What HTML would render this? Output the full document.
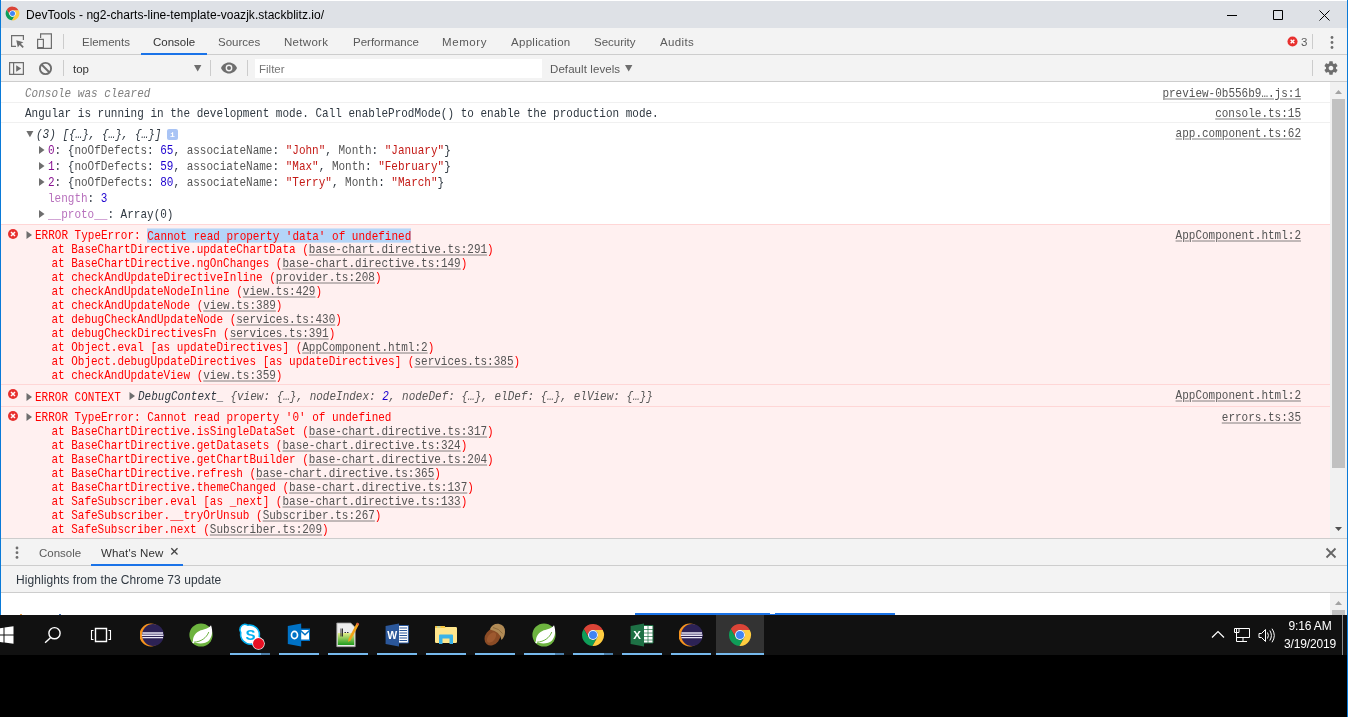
<!DOCTYPE html>
<html><head><meta charset="utf-8"><title>DevTools</title>
<style>
*{box-sizing:border-box;margin:0;padding:0}
html,body{width:1348px;height:717px;overflow:hidden;background:#000}
body{position:relative;font-family:"Liberation Sans",sans-serif;font-size:12px;color:#303942}
.abs{position:absolute}
svg{position:absolute;overflow:visible}
#win{will-change:transform;position:absolute;left:0;top:0;width:1348px;height:615px;background:#fff;overflow:hidden}
#title{position:absolute;left:0;top:0;width:1348px;height:28px;background:#dee1e6;border-top:1px solid #fff}
#title .t{position:absolute;left:26px;top:7px;letter-spacing:.035px;font-size:12px;line-height:14px;color:#000;white-space:nowrap}
#tabs{position:absolute;left:0;top:28px;width:1348px;height:27px;background:#f3f3f3;border-bottom:1px solid #cdcdcd}
.tab{position:absolute;top:7px;font-size:11.5px;line-height:14px;color:#5a5a5a;white-space:nowrap}
.tab.sel{color:#333}
#tbar{position:absolute;left:0;top:55px;width:1348px;height:27px;background:#f3f3f3;border-bottom:1px solid #cdcdcd}
.vsep{position:absolute;width:1px;background:#ccc}
.ul{position:absolute;height:2px;background:#1a73e8}
#msgs{position:absolute;left:0;top:82px;width:1331px;height:456px;background:#fff;overflow:hidden;font-family:"Liberation Mono",monospace;font-size:11px;color:#303942}
.row{position:absolute;left:0;width:1331px;border-top:1px solid #f0f0f0}
.row.err{background:#fff0f0;border-top:1px solid #ffd6d6;color:#ff0000}
.ln{position:absolute;white-space:pre;line-height:14px;height:14px;transform:translateY(1.1px) scaleY(1.09);transform-origin:0 7px}
.src{position:absolute;right:30px;white-space:pre;line-height:14px;height:14px;transform:translateY(1.1px) scaleY(1.09);transform-origin:0 7px;color:#545454;text-decoration:underline;text-decoration-color:rgba(84,84,84,.65)}
.lk{color:#545454;text-decoration:underline;text-decoration-color:rgba(84,84,84,.65)}
.num{color:#1c00cf}.str{color:#c41a16}.key{color:#881391}.dim{color:#b871bd}
i{font-style:italic}.pk{color:#565656}.selt{background:#b4d5f8;padding-top:1.5px}
.sb{position:absolute;left:1330px;width:17px;background:#f1f1f1}
.sb b{position:absolute;left:2px;width:13px;background:#c1c1c1}
#drawer{position:absolute;left:0;top:538px;width:1348px;height:77px;background:#fff;border-top:1px solid #cdcdcd}
#dtabs{position:absolute;left:0;top:0;width:1348px;height:27px;background:#f3f3f3;border-bottom:1px solid #cdcdcd}
#dhead{position:absolute;left:0;top:27px;width:1348px;height:27px;background:#f3f3f3;border-bottom:1px solid #cdcdcd}
#task{will-change:transform;position:absolute;left:0;top:615px;width:1348px;height:40px;background:#111}
.run{position:absolute;top:38px;height:2px;background:#76b9ed}
.run2{position:absolute;top:38px;height:2px;background:#4c7faa}
.edge{position:absolute;top:0;width:1px;background:#0a7ad8}
.clk{will-change:transform;position:absolute;color:#fff;font-size:12px;line-height:14px;white-space:nowrap;text-align:center}
</style></head><body>
<svg width="0" height="0"><defs><symbol id="chr" viewBox="0 0 48 48"><path d="M43.60 14.00A22 22 0 0 0 5.54 12.03L15.34 29.00A10 10 0 0 1 24.00 14.00Z" fill="#db4437"/><path d="M5.54 12.03A22 22 0 0 0 22.86 45.97L32.66 29.00A10 10 0 0 1 15.34 29.00Z" fill="#0f9d58"/><path d="M22.86 45.97A22 22 0 0 0 43.60 14.00L24.00 14.00A10 10 0 0 1 32.66 29.00Z" fill="#ffcd40"/><circle cx="24" cy="24" r="10" fill="#fff"/><circle cx="24" cy="24" r="8" fill="#4285f4"/></symbol>
<symbol id="ecl" viewBox="0 0 24 24"><circle cx="10.800" cy="12" r="11.400" fill="#f7941e"/><circle cx="13" cy="12" r="10.900" fill="#2c2255"/><path d="M2.4 9.3h20.6v1.5H2.4zM1.8 11.6h21.6v1.5H1.8zM2.4 13.9h20.6v1.4H2.4z" fill="#e9e6f5"/></symbol>
<symbol id="spr" viewBox="0 0 24 24"><circle cx="12" cy="12" r="11.600" fill="#6db33f"/><path d="M4.200 18.800C3.400 15.500 5 10.500 10.400 7.900C14 6.200 18.500 6.800 22 2.300C24 8 23.500 13 20 17.400C17 20.800 9 21.500 4.200 18.800Z" fill="#fff"/><path d="M5 19.200C12 18.700 17.500 15 19.800 9" fill="none" stroke="#6db33f" stroke-width="1"/><circle cx="4.300" cy="19.300" r="1" fill="#fff"/></symbol>
</defs></svg>
<div id="win">
<div id="title">
<svg style="left:5px;top:5px" width="15" height="15"><use href="#chr"/></svg>
<span class="t">DevTools - ng2-charts-line-template-voazjk.stackblitz.io/</span>
<svg style="left:1220px;top:0" width="128" height="28" fill="none" stroke="#000" stroke-width="1"><path d="M7 14.500h10M53.500 9.500h9v9h-9zM99.500 9.500l10 10M109.500 9.500l-10 10"/></svg>
</div>
<div id="tabs">
<svg style="left:0;top:0" width="70" height="27" fill="none" stroke="#6e6e6e" stroke-width="1.200"><path d="M16 18.400h-4.400V7.600h11.800V12"/><path d="M16.300 12.300l1.500 7.200 1.800-2.500 3 3 1.200-1.200-3-3 2.600-1.600z" fill="#6e6e6e" stroke="none"/><path d="M40.600 10V5.900h10.800v14.400h-8M37.600 11.300h5.800v9.200h-5.800z"/><path d="M37.600 19h5.800v1.500h-5.800z" fill="#6e6e6e" stroke="none"/></svg>
<div class="vsep" style="left:63px;top:6px;height:15px"></div>
<span class="tab" style="left:82px">Elements</span>
<span class="tab sel" style="left:153px">Console</span>
<span class="tab" style="left:218px">Sources</span>
<span class="tab" style="left:284px;letter-spacing:.3px">Network</span>
<span class="tab" style="left:353px">Performance</span>
<span class="tab" style="left:442px;letter-spacing:.6px">Memory</span>
<span class="tab" style="left:511px;letter-spacing:.3px">Application</span>
<span class="tab" style="left:594px">Security</span>
<span class="tab" style="left:660px;letter-spacing:.35px">Audits</span>
<div class="ul" style="left:141px;top:25px;width:66px"></div>
<svg style="left:1287px;top:8px" width="11" height="11" viewBox="0 0 12 12"><circle cx="6" cy="6" r="5.500" fill="#e8302e"/><path d="M4 4L8 8M8 4L4 8" stroke="#fff" stroke-width="1.500"/></svg>
<span class="tab" style="left:1301px;color:#5a5a5a">3</span>
<div class="vsep" style="left:1312px;top:6px;height:15px"></div>
<svg style="left:1329.500px;top:6.500px" width="4" height="16" fill="#6e6e6e"><circle cx="2" cy="2.500" r="1.400"/><circle cx="2" cy="7.500" r="1.400"/><circle cx="2" cy="12.500" r="1.400"/></svg>
</div>
<div id="tbar">
<svg style="left:0;top:0" width="70" height="27" fill="none" stroke="#6e6e6e" stroke-width="1.200"><path d="M9.600 7.600h13.800v11.800H9.600zM13.600 7.600v11.800"/><path d="M16.200 10.200l5 3.300-5 3.300z" fill="#6e6e6e" stroke="none"/><circle cx="45.500" cy="13.500" r="5.600" stroke-width="1.900"/><path d="M41.500 9.500l8 8" stroke-width="1.900"/></svg>
<div class="vsep" style="left:63px;top:5px;height:16px"></div>
<span class="tab" style="left:73px;top:7px;color:#333">top</span>
<svg style="left:194px;top:10px" width="8" height="7"><path d="M0 0h7.400L3.700 6.400z" fill="#6e6e6e"/></svg>
<div class="vsep" style="left:210px;top:5px;height:16px"></div>
<svg style="left:221px;top:7px" width="16" height="12" viewBox="0 0 16 12"><path d="M8 .5C4.400.5 1.400 2.800 0 6c1.400 3.200 4.400 5.500 8 5.500s6.600-2.300 8-5.500C14.600 2.800 11.600.5 8 .5z" fill="#6e6e6e"/><circle cx="8" cy="6" r="3.400" fill="#f3f3f3"/><circle cx="8" cy="6" r="2" fill="#6e6e6e"/></svg>
<div class="vsep" style="left:247px;top:5px;height:16px"></div>
<div class="abs" style="left:255px;top:4px;width:287px;height:19px;background:#fff"></div>
<span class="tab" style="left:259px;top:7px;color:#757575">Filter</span>
<span class="tab" style="left:550px;top:6.500px;color:#5a5a5a;letter-spacing:.08px">Default levels</span>
<svg style="left:625px;top:10px" width="8" height="7"><path d="M0 0h7.400L3.700 6.400z" fill="#6e6e6e"/></svg>
<div class="vsep" style="left:1312px;top:5px;height:16px"></div>
<svg style="left:1323px;top:5px" width="16" height="16" viewBox="0 0 24 24"><path fill="#6e6e6e" d="M19.430 12.980c.040-.320.070-.640.070-.980s-.030-.660-.070-.980l2.110-1.650c.190-.150.240-.420.120-.640l-2-3.460c-.120-.220-.390-.300-.610-.220l-2.490 1c-.520-.400-1.080-.730-1.690-.980l-.380-2.650C14.460 2.180 14.250 2 14 2h-4c-.250 0-.460.180-.490.420l-.380 2.650c-.610.250-1.170.590-1.690.980l-2.490-1c-.230-.090-.490 0-.610.220l-2 3.460c-.130.220-.070.490.120.640l2.110 1.650c-.040.320-.070.650-.070.980s.030.660.070.980l-2.110 1.650c-.190.150-.240.420-.120.640l2 3.460c.120.220.390.300.610.220l2.490-1c.520.400 1.080.730 1.690.980l.380 2.650c.030.240.240.420.490.420h4c.250 0 .460-.180.490-.420l.380-2.650c.610-.250 1.170-.590 1.690-.980l2.490 1c.230.090.490 0 .610-.220l2-3.460c.120-.220.070-.490-.120-.640l-2.110-1.650zM12 15.500c-1.930 0-3.500-1.570-3.500-3.500s1.570-3.500 3.500-3.500 3.500 1.570 3.500 3.500-1.570 3.500-3.500 3.500z"/></svg>
</div>
<div id="msgs">
<div class="row" style="top:0px;height:20px;border-top:none"></div>
<div class="row" style="top:20px;height:20px"></div>
<div class="row" style="top:40px;height:102px"></div>
<div class="row err" style="top:142px;height:160px"></div>
<div class="row err" style="top:302px;height:22px"></div>
<div class="row err" style="top:324px;height:134px"></div>
<div class="ln" style="top:4px;left:25px"><i style="color:#808080">Console was cleared</i></div>
<div class="src" style="top:4px">preview-0b556b9….js:1</div>
<div class="ln" style="top:24px;left:25px">Angular is running in the development mode. Call enableProdMode() to enable the production mode.</div>
<div class="src" style="top:24px">console.ts:15</div>
<svg class="abs" style="left:0;top:-82px" width="700" height="540" ><polygon points="26.4,131 33.4,131 29.9,137.2" fill="#6e6e6e"/></svg>
<div class="ln" style="top:45px;left:36px"><i>(3) [{…}, {…}, {…}]</i></div>
<div class="src" style="top:44px">app.component.ts:62</div>
<div class="abs" style="left:167px;top:47px;width:11px;height:11px;border-radius:2px;background:#a9c4f5;color:#fff;font:bold 8px/11px 'Liberation Mono',monospace;text-align:center">i</div>
<svg class="abs" style="left:0;top:-82px" width="700" height="540" ><polygon points="39.0,146 44.5,150 39.0,154" fill="#6e6e6e"/></svg>
<div class="ln" style="top:61px;left:48px"><span class="key">0</span>: {<span class="pk">noOfDefects</span>: <span class="num">65</span>, <span class="pk">associateName</span>: <span class="str">"John"</span>, <span class="pk">Month</span>: <span class="str">"January"</span>}</div>
<svg class="abs" style="left:0;top:-82px" width="700" height="540" ><polygon points="39.0,162 44.5,166 39.0,170" fill="#6e6e6e"/></svg>
<div class="ln" style="top:77px;left:48px"><span class="key">1</span>: {<span class="pk">noOfDefects</span>: <span class="num">59</span>, <span class="pk">associateName</span>: <span class="str">"Max"</span>, <span class="pk">Month</span>: <span class="str">"February"</span>}</div>
<svg class="abs" style="left:0;top:-82px" width="700" height="540" ><polygon points="39.0,178 44.5,182 39.0,186" fill="#6e6e6e"/></svg>
<div class="ln" style="top:93px;left:48px"><span class="key">2</span>: {<span class="pk">noOfDefects</span>: <span class="num">80</span>, <span class="pk">associateName</span>: <span class="str">"Terry"</span>, <span class="pk">Month</span>: <span class="str">"March"</span>}</div>
<div class="ln" style="top:109px;left:48px"><span class="dim">length</span>: <span class="num">3</span></div>
<svg class="abs" style="left:0;top:-82px" width="700" height="540" ><polygon points="39.0,210 44.5,214 39.0,218" fill="#6e6e6e"/></svg>
<div class="ln" style="top:125px;left:48px"><span class="dim">__proto__</span>: Array(0)</div>
<svg class="abs" style="left:7px;top:146px" width="12" height="12" viewBox="0 0 12 12"><circle cx="6" cy="6" r="5" fill="#e8302e"/><path d="M4 4L8 8M8 4L4 8" stroke="#fff" stroke-width="1.5" stroke-linecap="butt"/></svg>
<svg class="abs" style="left:0;top:-82px" width="700" height="540" ><polygon points="26.5,231 32,235 26.5,239" fill="#6e6e6e"/></svg>
<div class="ln" style="top:146px;left:35px;color:#f00">ERROR TypeError: <span class="selt">Cannot read property 'data' of undefined</span></div>
<div class="src" style="top:146px">AppComponent.html:2</div>
<div class="ln" style="top:160px;left:25px;color:#f00">    at BaseChartDirective.updateChartData (<span class="lk">base-chart.directive.ts:291</span>)</div>
<div class="ln" style="top:174px;left:25px;color:#f00">    at BaseChartDirective.ngOnChanges (<span class="lk">base-chart.directive.ts:149</span>)</div>
<div class="ln" style="top:188px;left:25px;color:#f00">    at checkAndUpdateDirectiveInline (<span class="lk">provider.ts:208</span>)</div>
<div class="ln" style="top:202px;left:25px;color:#f00">    at checkAndUpdateNodeInline (<span class="lk">view.ts:429</span>)</div>
<div class="ln" style="top:216px;left:25px;color:#f00">    at checkAndUpdateNode (<span class="lk">view.ts:389</span>)</div>
<div class="ln" style="top:230px;left:25px;color:#f00">    at debugCheckAndUpdateNode (<span class="lk">services.ts:430</span>)</div>
<div class="ln" style="top:244px;left:25px;color:#f00">    at debugCheckDirectivesFn (<span class="lk">services.ts:391</span>)</div>
<div class="ln" style="top:258px;left:25px;color:#f00">    at Object.eval [as updateDirectives] (<span class="lk">AppComponent.html:2</span>)</div>
<div class="ln" style="top:272px;left:25px;color:#f00">    at Object.debugUpdateDirectives [as updateDirectives] (<span class="lk">services.ts:385</span>)</div>
<div class="ln" style="top:286px;left:25px;color:#f00">    at checkAndUpdateView (<span class="lk">view.ts:359</span>)</div>
<svg class="abs" style="left:7px;top:306px" width="12" height="12" viewBox="0 0 12 12"><circle cx="6" cy="6" r="5" fill="#e8302e"/><path d="M4 4L8 8M8 4L4 8" stroke="#fff" stroke-width="1.5" stroke-linecap="butt"/></svg>
<svg class="abs" style="left:0;top:-82px" width="700" height="540" ><polygon points="26.5,393 32,397 26.5,401" fill="#6e6e6e"/></svg>
<div class="ln" style="top:308px;left:35px;color:#f00">ERROR CONTEXT</div>
<svg class="abs" style="left:0;top:-82px" width="700" height="540" ><polygon points="129.5,392 135,396 129.5,400" fill="#6e6e6e"/></svg>
<div class="ln" style="top:307px;left:138px"><i style="color:#303942">DebugContext_ <span class="pk">{view: {…}, nodeIndex: <span class="num">2</span>, nodeDef: {…}, elDef: {…}, elView: {…}}</span></i></div>
<div class="src" style="top:306px">AppComponent.html:2</div>
<svg class="abs" style="left:7px;top:328px" width="12" height="12" viewBox="0 0 12 12"><circle cx="6" cy="6" r="5" fill="#e8302e"/><path d="M4 4L8 8M8 4L4 8" stroke="#fff" stroke-width="1.5" stroke-linecap="butt"/></svg>
<svg class="abs" style="left:0;top:-82px" width="700" height="540" ><polygon points="26.5,413 32,417 26.5,421" fill="#6e6e6e"/></svg>
<div class="ln" style="top:328px;left:35px;color:#f00">ERROR TypeError: Cannot read property '0' of undefined</div>
<div class="src" style="top:328px">errors.ts:35</div>
<div class="ln" style="top:342px;left:25px;color:#f00">    at BaseChartDirective.isSingleDataSet (<span class="lk">base-chart.directive.ts:317</span>)</div>
<div class="ln" style="top:356px;left:25px;color:#f00">    at BaseChartDirective.getDatasets (<span class="lk">base-chart.directive.ts:324</span>)</div>
<div class="ln" style="top:370px;left:25px;color:#f00">    at BaseChartDirective.getChartBuilder (<span class="lk">base-chart.directive.ts:204</span>)</div>
<div class="ln" style="top:384px;left:25px;color:#f00">    at BaseChartDirective.refresh (<span class="lk">base-chart.directive.ts:365</span>)</div>
<div class="ln" style="top:398px;left:25px;color:#f00">    at BaseChartDirective.themeChanged (<span class="lk">base-chart.directive.ts:137</span>)</div>
<div class="ln" style="top:412px;left:25px;color:#f00">    at SafeSubscriber.eval [as _next] (<span class="lk">base-chart.directive.ts:133</span>)</div>
<div class="ln" style="top:426px;left:25px;color:#f00">    at SafeSubscriber.__tryOrUnsub (<span class="lk">Subscriber.ts:267</span>)</div>
<div class="ln" style="top:440px;left:25px;color:#f00">    at SafeSubscriber.next (<span class="lk">Subscriber.ts:209</span>)</div>
</div>
<div class="sb" style="top:82px;height:456px"><b style="top:17px;height:369px"></b>
<svg style="left:5px;top:8px" width="7" height="4"><path d="M0 4L3.500 0 7 4z" fill="#a3a3a3"/></svg>
<svg style="left:5px;top:445px" width="7" height="4"><path d="M0 0h7L3.500 4z" fill="#505050"/></svg>
</div>
<div id="drawer">
<div id="dtabs">
<svg style="left:15px;top:7px" width="4" height="14" fill="#6e6e6e"><circle cx="2" cy="2" r="1.400"/><circle cx="2" cy="6.700" r="1.400"/><circle cx="2" cy="11.400" r="1.400"/></svg>
<span class="tab" style="left:39px;top:7px">Console</span>
<span class="tab sel" style="left:101px;top:6.500px;letter-spacing:.15px">What's New</span>
<svg style="left:170.600px;top:9px" width="7" height="7" stroke="#444" stroke-width="1.300"><path d="M.3.300l6.200 6.200M6.500.300l-6.200 6.200"/></svg>
<div class="ul" style="left:91px;top:25px;width:92px"></div>
<svg style="left:1326px;top:8.500px" width="10" height="10" stroke="#666" stroke-width="1.800"><path d="M.5.500l9 9M9.500.500l-9 9"/></svg>
</div>
<div id="dhead"><span class="tab" style="left:16px;top:6.500px;color:#303942;font-size:12px;letter-spacing:.07px">Highlights from the Chrome 73 update</span></div>
<div class="abs" style="left:635px;top:74px;width:260px;height:3px;background:#1a73e8"></div>
<div class="abs" style="left:770px;top:74px;width:5px;height:1px;background:#fff"></div>
<div class="abs" style="left:20px;top:75px;width:2px;height:1px;background:#e8a04a"></div><div class="abs" style="left:59px;top:75px;width:2px;height:1px;background:#3f6fb5"></div>
</div>
<div class="sb" style="top:593px;height:22px"><b style="top:17px;height:5px"></b>
<svg style="left:5px;top:8px" width="7" height="4"><path d="M0 4L3.500 0 7 4z" fill="#a3a3a3"/></svg>
</div>
<div class="edge" style="left:0;height:615px"></div>
</div>
<div id="task">
<svg style="left:0;top:0" width="130" height="40"><path d="M-3.500 13.700l7-1v6.900h-7zM4.500 12.600l9-1.300v8.300h-9zM-3.500 20.500h7v6.900l-7-1zM4.500 20.500h9v8.300l-9-1.300z" fill="#fff"/><g fill="none" stroke="#fff" stroke-width="1.400"><circle cx="54.500" cy="18.200" r="5.600"/><path d="M50.700 22.400l-5.600 5.400"/><path d="M95.500 13.500h11v13h-11z"/><path d="M93.500 15.500h-2v9h2M108.500 15.500h2v9h-2" stroke-width="1.100"/></g></svg>
<svg style="left:140px;top:8px" width="24" height="24"><use href="#ecl"/></svg>
<svg style="left:189px;top:8px" width="24" height="24"><use href="#spr"/></svg>
<div class="abs" style="left:716px;top:0;width:48px;height:40px;background:#333"></div>
<div class="run" style="left:230px;width:31px"></div><div class="run2" style="left:261px;width:9px"></div>
<div class="run" style="left:279px;width:40px"></div>
<div class="run" style="left:328px;width:40px"></div>
<div class="run" style="left:377px;width:40px"></div>
<div class="run" style="left:426px;width:40px"></div>
<div class="run" style="left:475px;width:40px"></div>
<div class="run" style="left:524px;width:31px"></div><div class="run2" style="left:555px;width:9px"></div>
<div class="run" style="left:573px;width:31px"></div><div class="run2" style="left:604px;width:9px"></div>
<div class="run" style="left:622px;width:40px"></div>
<div class="run" style="left:671px;width:40px"></div>
<div class="run" style="left:716px;width:48px"></div>
<!-- skype -->
<svg style="left:238.500px;top:7.500px" width="27" height="27" viewBox="0 0 26 26"><path d="M5.300 1.200a5 5 0 0 1 3 .9 9.500 9.500 0 0 1 11.200 11 5.200 5.200 0 0 1-7.300 7.200A9.500 9.500 0 0 1 1.700 9.200a5.200 5.200 0 0 1 3.600-8z" fill="#fff" stroke="#00aff0" stroke-width="1.500"/><text x="11" y="16.500" text-anchor="middle" font-family="Liberation Sans,sans-serif" font-weight="bold" font-size="14.500" fill="#00aff0">S</text><circle cx="18.800" cy="19.800" r="6" fill="#fff"/><circle cx="18.800" cy="19.800" r="5.300" fill="#e81123"/></svg>
<!-- outlook -->
<svg style="left:287px;top:8px" width="24" height="24" viewBox="0 0 24 24"><path d="M13 5.500h10v12.500H13z" fill="#0072c6"/><path d="M14 7h8v9.500h-8z" fill="#fff"/><path d="M14 7l4 3.800L22 7v2l-4 3.800L14 9z" fill="#0072c6"/><path d="M.8 3L14.200.6v22.800L.8 21z" fill="#0072c6"/><ellipse cx="7.500" cy="12" rx="3" ry="3.600" fill="none" stroke="#fff" stroke-width="1.700"/></svg>
<!-- notepad++ -->
<svg style="left:336px;top:7px" width="24" height="26" viewBox="0 0 24 26"><defs><linearGradient id="npg" x1="0" y1="0" x2="0" y2="1"><stop offset="0" stop-color="#e6f08a"/><stop offset="1" stop-color="#1f9a1c"/></linearGradient></defs><path d="M.8 1h14l4.400 4.400v19.300H.8z" fill="#ececec" stroke="#9a9a9a" stroke-width=".8"/><path d="M1.800 11h16.400v12H1.800z" fill="url(#npg)"/><path d="M5 6.500v8M6.500 6.500v8" stroke="#333" stroke-width="1"/><path d="M8.500 10.500h4" stroke="#333" stroke-width="1.200" stroke-dasharray="1.500 1"/><path d="M21 .6l2.200 1.300-8.600 16.400-2.400 1.600.200-2.900z" fill="#f2a31b"/><path d="M21.300.8l1.700 1-.8 1.500-1.700-1z" fill="#d8484a"/></svg>
<!-- word -->
<svg style="left:385px;top:8px" width="24" height="24" viewBox="0 0 24 24"><path d="M13 2.500h10.400v17.500H13z" fill="#fff" stroke="#2b579a" stroke-width="1"/><path d="M14.500 5h7.500M14.500 7.500h7.500M14.500 10h7.500M14.500 12.500h7.500M14.500 15h7.500M14.500 17.500h7.500" stroke="#2b579a" stroke-width="1.100"/><path d="M.6 3L14 .6v22.800L.6 21z" fill="#2b579a"/><text x="7.200" y="16" text-anchor="middle" font-family="Liberation Sans,sans-serif" font-weight="bold" font-size="10.500" fill="#fff">W</text></svg>
<!-- explorer -->
<svg style="left:434px;top:10px" width="24" height="20" viewBox="0 0 24 20"><path d="M1 2.200q0-1.200 1.200-1.200h7.600q1 0 1.400 1h10.600q1.200 0 1.200 1.200v13.600q0 1.200-1.200 1.200H2.200Q1 18 1 16.800z" fill="#ffe68c"/><path d="M1 2.200q0-1.200 1.200-1.200h7.600q1 0 1.400 1.200l.3.800H1z" fill="#f6c73f"/><path d="M3 2h3.500" stroke="#9adfef" stroke-width="1"/><path d="M5 10.600q0-1 1-1h12q1 0 1 1V19h-3.500v-5.400h-7V19H5z" fill="#3bb3e8"/></svg>
<!-- acorn -->
<svg style="left:483px;top:8px" width="24" height="24" viewBox="0 0 24 24"><ellipse cx="9.500" cy="14" rx="7.200" ry="9.200" transform="rotate(38 9.500 14)" fill="#8a4b25"/><ellipse cx="8.500" cy="14.500" rx="3.500" ry="6" transform="rotate(38 8.500 14.500)" fill="#a65f33" opacity=".7"/><path d="M6.800 6.500Q9 .5 15.500.8q6.500 1 6.500 8 0 5-3.500 8.200Q17.500 8.500 6.800 6.500z" fill="#b08a55"/><path d="M10 4.500q6 1 9.500 6" stroke="#8f6c3d" stroke-width="1" fill="none"/></svg>
<svg style="left:532px;top:8px" width="24" height="24"><use href="#spr"/></svg>
<svg style="left:580.800px;top:7.700px" width="24" height="24"><use href="#chr"/></svg>
<!-- excel -->
<svg style="left:630px;top:8px" width="24" height="24" viewBox="0 0 24 24"><path d="M13 2.500h10v17.500H13z" fill="#fff" stroke="#1e7145" stroke-width="1"/><path d="M14 6.500h9M14 10h9M14 13.500h9M14 17h9M18 3v17" stroke="#1e7145" stroke-width=".7"/><path d="M.6 3L14 .6v22.800L.6 21z" fill="#1e7145"/><text x="7.200" y="16.200" text-anchor="middle" font-family="Liberation Sans,sans-serif" font-weight="bold" font-size="11.500" fill="#fff">X</text></svg>
<svg style="left:679px;top:8px" width="24" height="24"><use href="#ecl"/></svg>
<svg style="left:728.200px;top:7.700px" width="24" height="24"><use href="#chr"/></svg>

<div class="abs" style="left:1342px;top:0;width:1px;height:40px;background:#8a8a8a"></div>
<svg style="left:1205px;top:7px" width="80" height="24" fill="none" stroke="#fff" stroke-width="1.200"><path d="M7 15.500l6-6 6 6"/><path d="M31.500 6.500h13v9h-13zM38 15.500v4M34 19.500h8M29.500 6.500h4.500v4h-4.500zM31.500 10.500v9h2.500" stroke-width="1"/><path d="M54 11.500h2.500l4-4v12l-4-4H54z" stroke-width="1"/><path d="M62.500 10.500q1.800 3 0 6M64.800 8.500q3.200 5 0 10M67 6.700q4.600 6.800 0 13.600" stroke-width="1"/></svg>
<div class="clk" style="left:1280.500px;top:4px;width:58px;letter-spacing:-.15px">9:16 AM</div>
<div class="clk" style="left:1281px;top:22px;width:58px;letter-spacing:-.15px">3/19/2019</div>
</div>
<div class="edge" style="left:1347px;height:717px"></div>
</body></html>
